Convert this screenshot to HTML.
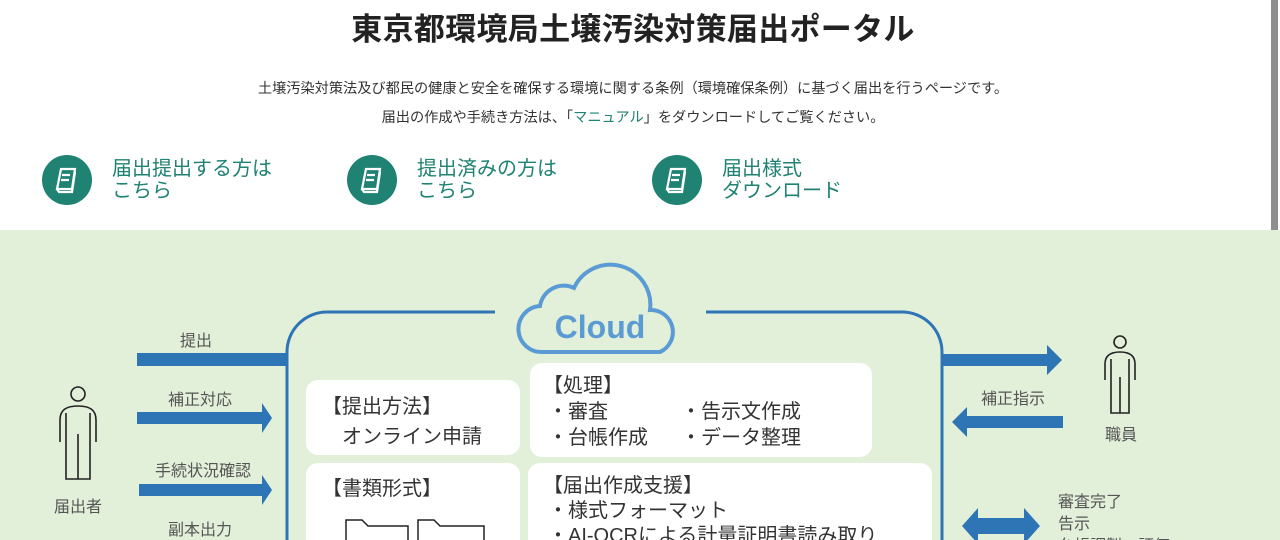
<!DOCTYPE html>
<html><head><meta charset="utf-8"><style>
body{margin:0;width:1280px;height:540px;overflow:hidden;background:#fff;font-family:"Liberation Sans","Noto Sans CJK JP",sans-serif;position:relative}
h1{position:absolute;left:0;width:1266px;top:4px;margin:0;text-align:center;font-size:31px;font-weight:bold;color:#222;letter-spacing:0.3px}
.p{position:absolute;left:0;width:1266px;text-align:center;font-size:14.2px;color:#333}
.ic{position:absolute;width:50px;height:50px;border-radius:50%;background:#1f8272;top:155px}
.lk{position:absolute;top:158px;font-size:20px;line-height:22px;color:#1f8272}
.sb{position:absolute;left:1271px;top:0;width:7px;height:230px;background:#8e8e8e}
</style></head><body>
<h1>東京都環境局土壌汚染対策届出ポータル</h1>
<div class="p" style="top:78px">土壌汚染対策法及び都民の健康と安全を確保する環境に関する条例（環境確保条例）に基づく届出を行うページです。</div>
<div class="p" style="top:107px">届出の作成や手続き方法は、「<span style="color:#1f8272">マニュアル</span>」をダウンロードしてご覧ください。</div>
<div class="ic" style="left:42px"><svg width="50" height="50"><g fill="none" stroke="#fff" stroke-width="2.2"><path d="M19 14h14l-3 20H15z"/><path d="M15 34l2 3h13l3-20"/><path d="M20 20h8M19 25h8"/></g></svg></div>
<div class="ic" style="left:347px"><svg width="50" height="50"><g fill="none" stroke="#fff" stroke-width="2.2"><path d="M19 14h14l-3 20H15z"/><path d="M15 34l2 3h13l3-20"/><path d="M20 20h8M19 25h8"/></g></svg></div>
<div class="ic" style="left:652px"><svg width="50" height="50"><g fill="none" stroke="#fff" stroke-width="2.2"><path d="M19 14h14l-3 20H15z"/><path d="M15 34l2 3h13l3-20"/><path d="M20 20h8M19 25h8"/></g></svg></div>
<div class="lk" style="left:112px">届出提出する方は<br>こちら</div>
<div class="lk" style="left:417px">提出済みの方は<br>こちら</div>
<div class="lk" style="left:722px">届出様式<br>ダウンロード</div>
<div class="sb"></div>
<svg style="position:absolute;left:0;top:230px" width="1280" height="310" font-family="Liberation Sans, Noto Sans CJK JP, sans-serif">
<rect width="1280" height="310" fill="#e2efd9"/>
<g fill="none" stroke="#2e75b6" stroke-width="3">
<path d="M287 320V122a40 40 0 0 1 40-40H495"/>
<path d="M706 82H902a40 40 0 0 1 40 40V320"/>
</g>
<path d="M543 122a23 23 0 0 1 -3 -46a24 24 0 0 1 34 -18a40 40 0 0 1 76 22a22 22 0 0 1 10 42z" fill="none" stroke="#5b9bd5" stroke-width="4"/>
<text x="600" y="108" font-size="32" font-weight="bold" fill="#5b9bd5" text-anchor="middle">Cloud</text>
<g fill="#fff"><rect x="306" y="150" width="214" height="75" rx="12"/><rect x="530" y="133" width="342" height="94" rx="12"/><rect x="306" y="233" width="214" height="90" rx="12"/><rect x="528" y="233" width="404" height="90" rx="12"/></g>
<g font-size="20" fill="#333">
<text x="322" y="183">【提出方法】</text><text x="342" y="213">オンライン申請</text>
<text x="543" y="162">【処理】</text>
<text x="548" y="188">・審査</text><text x="681" y="188">・告示文作成</text>
<text x="548" y="214">・台帳作成</text><text x="681" y="214">・データ整理</text>
<text x="322" y="265">【書類形式】</text>
<text x="543" y="262">【届出作成支援】</text>
<text x="548" y="287">・様式フォーマット</text>
<text x="548" y="312">・AI-OCRによる計量証明書読み取り</text>
</g>
<g fill="none" stroke="#222" stroke-width="1.5"><path d="M346 310v-20h16l6 6h40v14M418 310v-20h16l6 6h44v14"/></g>
<g fill="#2e75b6">
<rect x="137" y="123" width="150" height="13"/>
<path d="M137 182h125v-9l10 15-10 15v-9H137z"/>
<path d="M139 254h123v-9l10 15-10 15v-9H139z"/>
<path d="M942 124h105v-9l15 15-15 15v-9H942z"/>
<path d="M1063 186H967v-9l-15 15 15 15v-9h96z"/>
<path d="M962 296l16-18v10h46v-10l16 18-16 18v-10h-46v10z"/>
</g>
<g font-size="16" fill="#555">
<text x="196" y="116" text-anchor="middle">提出</text>
<text x="200" y="175" text-anchor="middle">補正対応</text>
<text x="203" y="246" text-anchor="middle">手続状況確認</text>
<text x="200" y="305" text-anchor="middle">副本出力</text>
<text x="78" y="282" text-anchor="middle">届出者</text>
<text x="1013" y="174" text-anchor="middle">補正指示</text>
<text x="1121" y="210" text-anchor="middle">職員</text>
<text x="1058" y="277">審査完了</text>
<text x="1058" y="299">告示</text>
<text x="1058" y="321">台帳調製・評価</text>
</g>
<g fill="none" stroke="#222" stroke-width="1.6">
<circle cx="78" cy="164" r="7"/>
<path d="M60 212v-22c0-10 6-14 18-14s18 4 18 14v22M66 183v66h24v-66M78 204v45"/>
<circle cx="1120" cy="112" r="6"/>
<path d="M1105 150v-16c0-8 5-12 15-12s15 4 15 12v16M1111 129v54h18v-54M1120 147v36"/>
</g>
</svg>
</body></html>
